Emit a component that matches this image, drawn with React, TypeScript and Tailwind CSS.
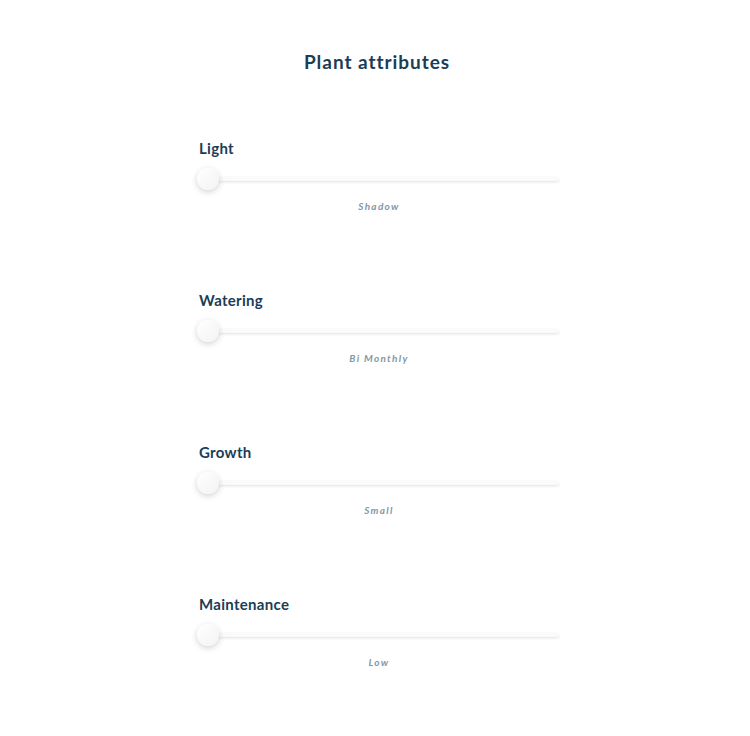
import React from "react"

const attributes = [
  { label: "Light", value: "Shadow" },
  { label: "Watering", value: "Bi Monthly" },
  { label: "Growth", value: "Small" },
  { label: "Maintenance", value: "Low" },
]

function AttributeSlider({ label, value }: { label: string; value: string }) {
  return (
    <div className="flex flex-col">
      <h3 className="text-[15px] leading-[20px] font-bold tracking-[0.02em] text-[#1b3d56]">{label}</h3>
      <div className="relative mt-[10px] h-[22px] flex items-center">
        <div className="h-[4px] w-full rounded-full bg-[#fafafa] shadow-[0_1px_3px_rgba(0,0,0,0.12)]" />
        {/* thumb */}
        <div className="absolute left-[-2px] top-0 h-[22px] w-[22px] rounded-full bg-gradient-to-br from-white to-[#f3f3f3] shadow-[0_2px_6px_rgba(0,0,0,0.18)]" />
      </div>
      <p className="mt-[9px] text-center text-[10px] leading-[14px] italic font-bold tracking-[0.13em] text-[#8597a6]">
        {value}
      </p>
    </div>
  )
}

export default function App() {
  return (
    <div className="min-h-[736px] bg-white pl-2 pt-[50px] font-['Lato',sans-serif]">
      <h1 className="text-center text-[19px] leading-[24px] font-bold tracking-[0.05em] text-[#1b3d56] -ml-1">
        Plant attributes
      </h1>
      <div className="mx-auto mt-[64px] flex w-[360px] flex-col gap-[77px]">
        {attributes.map((a) => (
          <AttributeSlider key={a.label} label={a.label} value={a.value} />
        ))}
      </div>
    </div>
  )
}
